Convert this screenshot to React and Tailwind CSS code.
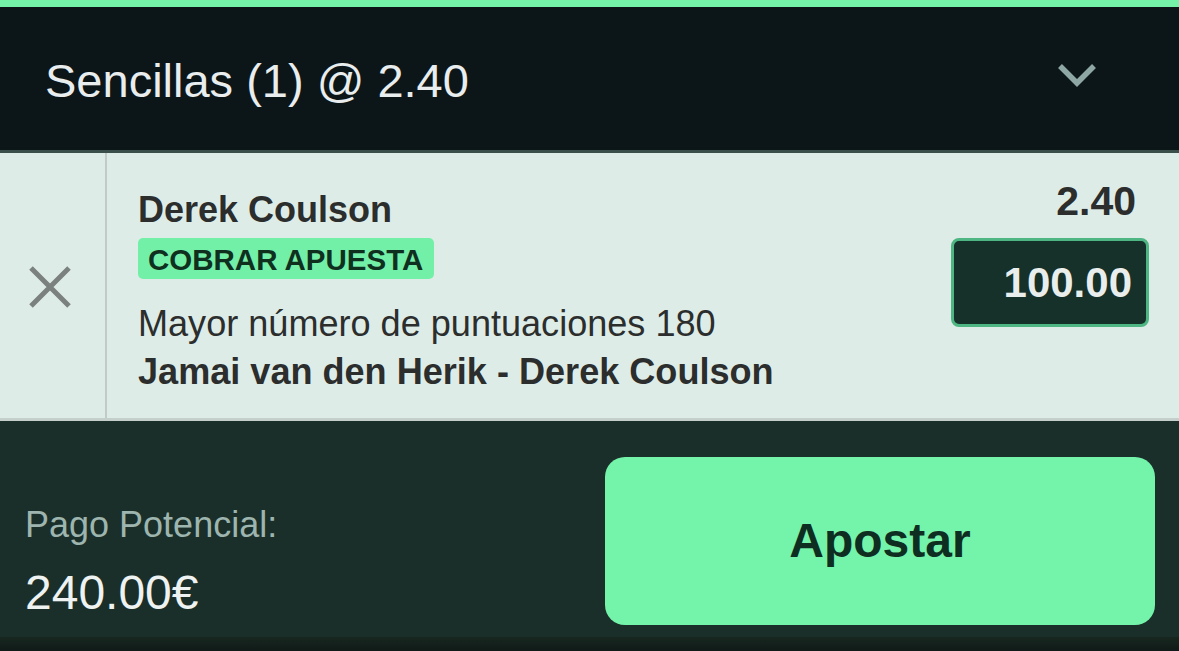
export default function App() {
  return (
    <div
      className="w-[1179px] h-[651px] overflow-hidden flex flex-col bg-[#1a2f2a]"
      style={{ fontFamily: '"Liberation Sans", Arial, sans-serif' }}
    >
      <div className="h-[7px] bg-[#75f4a9] shrink-0" />
      <div className="h-[146px] shrink-0 bg-[#0c1619] border-b-[3px] border-[#3a4e4a] flex items-center pl-[45px] pr-[82px]">
        <div className="text-[47px] leading-none text-[#e9eded] pt-[4px]">
          Sencillas (1) @ 2.40
        </div>
        <svg className="ml-auto mt-[-6px]" width="40" height="28" viewBox="0 0 40 28">
          <polyline
            points="3,4 20,21 37,4"
            fill="none"
            stroke="#8ea7a5"
            strokeWidth="5.5"
          />
        </svg>
      </div>
      <div className="h-[268px] shrink-0 bg-[#deece8] border-b-[3px] border-[#c4cecb] flex">
        <div className="w-[105px] shrink-0 flex items-center justify-center pr-[6px] pt-[2px]">
          <svg width="44" height="44" viewBox="0 0 44 44">
            <path d="M3 3 L41 41 M41 3 L3 41" stroke="#7b817f" strokeWidth="5" />
          </svg>
        </div>
        <div className="w-[2px] shrink-0 bg-[#c1ccc8]" />
        <div className="flex-1 flex pl-[31px] pr-[30px]">
          <div className="flex-1 pt-[37px] text-[#2b2e2d]">
            <div className="text-[36px] leading-[40px] font-bold">Derek Coulson</div>
            <div className="mt-[8px] inline-flex h-[41px] items-center rounded-[5px] bg-[#73f0a8] pl-[10px] pr-[11px] text-[29.5px] font-bold text-[#10301f] leading-none pt-[2px]">
              COBRAR APUESTA
            </div>
            <div className="mt-[21px] text-[36.1px] leading-[48px]">
              Mayor número de puntuaciones 180
            </div>
            <div className="text-[36.1px] leading-[48px] font-bold">
              Jamai van den Herik - Derek Coulson
            </div>
          </div>
          <div className="flex flex-col items-end pt-[28px]">
            <div className="text-[41px] leading-[40px] font-bold text-[#2b2e2d] pr-[13px]">2.40</div>
            <div className="mt-[17px] w-[198px] h-[89px] rounded-[8px] border-[3px] border-[#4db683] bg-[#16302a] flex items-center justify-end pr-[14px]">
              <span className="text-[42px] leading-none font-bold text-[#e9eeec]">100.00</span>
            </div>
          </div>
        </div>
      </div>
      <div className="flex-1 flex flex-col">
        <div className="flex-1 flex pl-[25px] pr-[24px] pt-[36px]">
          <div className="pt-[46px]">
            <div className="text-[36px] leading-[44px] text-[#9db5ae]">Pago Potencial:</div>
            <div className="mt-[18px] text-[48px] leading-[56px] text-[#eef2f0]">240.00€</div>
          </div>
          <div className="ml-auto w-[550px] h-[168px] rounded-[20px] bg-[#74f4aa] flex items-center justify-center">
            <span className="text-[48px] leading-none font-bold text-[#0f2e22]">Apostar</span>
          </div>
        </div>
        <div className="h-[14px] bg-gradient-to-b from-[#17271f] to-[#101a18]" />
      </div>
    </div>
  );
}
